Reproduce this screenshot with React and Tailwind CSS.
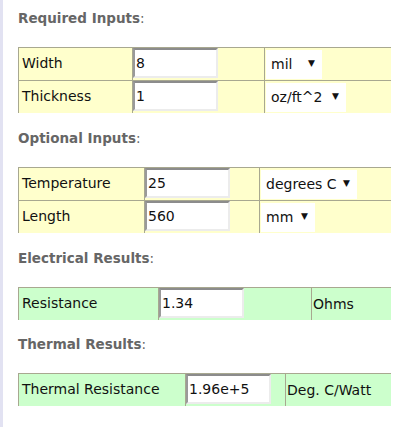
const font = { fontFamily: '"DejaVu Sans", Verdana, sans-serif' }

function Heading({ children }) {
  return (
    <div className="h-5 flex items-center text-[13.5px] text-[#666666]">
      <span className="font-bold">{children}</span>
      <span>:</span>
    </div>
  )
}

function Field({ value }) {
  return (
    <div className="w-[85px] h-[30px] bg-white border-2 border-t-[#8c8c8c] border-l-[#9a9a9a] border-b-[#ececec] border-r-[#ececec] pl-[1px] flex items-center text-[14px] text-[#111]">
      {value}
    </div>
  )
}

function Picker({ label, width }) {
  return (
    <div className={`${width} h-[29px] bg-white flex items-center justify-between pl-[5px] pr-[7px] text-[14px] text-[#111]`}>
      <span>{label}</span>
      <span className="text-[9px]">▼</span>
    </div>
  )
}

function Table({ bg, rows, cols }) {
  return (
    <div className={`w-[373px] ${bg} flex flex-col`}>
      {rows.map((r, i) => (
        <div key={i} className="h-[33px] flex border-t border-[#a8a890]">
          <div className={`${cols[0]} border-l border-[#a8a890] px-[3px] pb-[1px] flex items-center text-[14px] text-[#111]`}>{r.label}</div>
          <div className={`${cols[1]} border-l border-[#a8a890] flex items-start`}>
            <Field value={r.value} />
          </div>
          <div className="flex-1 border-l border-[#a8a890] px-[1px] flex items-center text-[14px] text-[#111]">
            {r.unit}
          </div>
        </div>
      ))}
    </div>
  )
}

export default function App() {
  return (
    <div className="w-[416px] h-[427px] bg-white flex" style={font}>
      <div className="w-[3px] bg-[#e2e2f2] shrink-0" />
      <div className="flex-1 pl-[15px] pt-2">
        <Heading>Required Inputs</Heading>
        <div className="mt-[19px]">
          <Table
            bg="bg-[#ffffcc]"
            cols={['w-[114px]', 'w-[132px]']}
            rows={[
              { label: 'Width', value: '8', unit: <Picker label="mil" width="w-[56px]" /> },
              { label: 'Thickness', value: '1', unit: <Picker label="oz/ft^2" width="w-[80px]" /> },
            ]}
          />
        </div>
        <div className="mt-[15px]">
          <Heading>Optional Inputs</Heading>
        </div>
        <div className="mt-[19px]">
          <Table
            bg="bg-[#ffffcc]"
            cols={['w-[126px]', 'w-[115px]']}
            rows={[
              { label: 'Temperature', value: '25', unit: <Picker label="degrees C" width="w-[96px]" /> },
              { label: 'Length', value: '560', unit: <Picker label="mm" width="w-[54px]" /> },
            ]}
          />
        </div>
        <div className="mt-[15px]">
          <Heading>Electrical Results</Heading>
        </div>
        <div className="mt-[19px]">
          <Table
            bg="bg-[#ccffcc]"
            cols={['w-[140px]', 'w-[153px]']}
            rows={[{ label: 'Resistance', value: '1.34', unit: 'Ohms' }]}
          />
        </div>
        <div className="mt-[14px]">
          <Heading>Thermal Results</Heading>
        </div>
        <div className="mt-[19px]">
          <Table
            bg="bg-[#ccffcc]"
            cols={['w-[167px]', 'w-[100px]']}
            rows={[{ label: 'Thermal Resistance', value: '1.96e+5', unit: 'Deg. C/Watt' }]}
          />
        </div>
      </div>
    </div>
  )
}
